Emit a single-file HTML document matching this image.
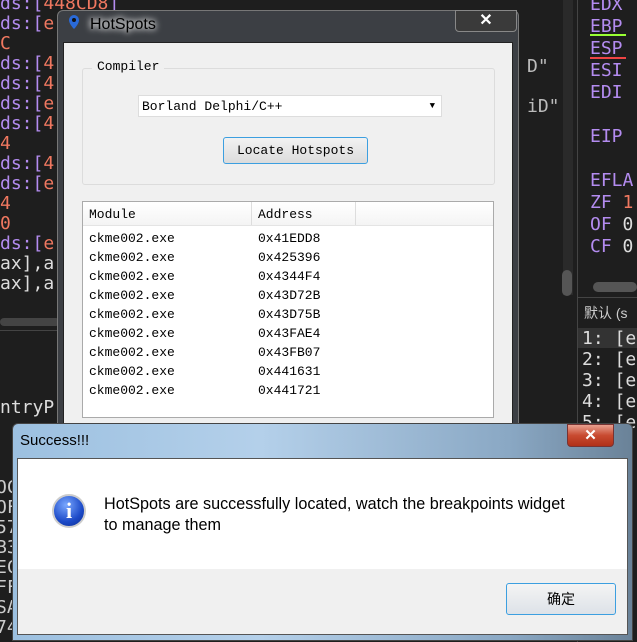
<html><head><style>
body{margin:0;width:637px;height:642px;background:#1e1e1e;position:relative;overflow:hidden;font-family:"Liberation Sans",sans-serif}
.a{position:absolute}
.code{font-family:"DejaVu Sans Mono",monospace;font-size:18px;line-height:20px;color:#b48cf0;white-space:pre}
.o{color:#f07860}.w{color:#ddd}
.mono{font-family:"Liberation Mono","Noto Sans CJK SC",monospace;font-size:13px;color:#000}
</style></head><body>
<div class="a code" style="left:0;top:-6px">ds:[<span class="o">448CD8</span>]
ds:[<span class="o">e</span>
<span class="o">C</span>
ds:[<span class="o">4</span>
ds:[<span class="o">4</span>
ds:[<span class="o">e</span>
ds:[<span class="o">4</span>
<span class="o">4</span>
ds:[<span class="o">4</span>
ds:[<span class="o">e</span>
<span class="o">4</span>
<span class="o">0</span>
ds:[<span class="o">e</span>
<span class="w">ax],a</span>
<span class="w">ax],a</span></div>
<div class="a" style="left:0;top:318px;width:60px;height:8px;background:#444;border-radius:4px"></div>
<div class="a" style="left:0;top:330px;width:60px;height:1px;background:#444"></div>
<div class="a code w" style="left:0;top:398px;color:#ddd">ntryP</div>
<div class="a code w" style="left:-4px;top:478px;color:#ccc">OC
OF
57
B3
EC
FF
SA
74</div>
<div class="a" style="left:520px;top:0;width:40px;height:330px;background:#1e1e1e"></div>
<div class="a code w" style="left:527px;top:57px;color:#bbb">D"

iD"</div>
<div class="a" style="left:563px;top:0;width:10px;height:295px;background:#2a2a2a"></div>
<div class="a" style="left:562px;top:270px;width:10px;height:26px;background:#555;border-radius:5px"></div>
<div class="a" style="left:577px;top:0;width:1px;height:642px;background:#444"></div>
<div class="a code" style="left:590px;top:-6px;line-height:22px">EDX
EBP
ESP
ESI
EDI

EIP

EFLA
ZF <span class="o">1</span>
<span>OF</span> <span class="w">0</span>
CF <span class="w">0</span></div>
<div class="a" style="left:590px;top:34px;width:36px;height:2px;background:#9f3"></div>
<div class="a" style="left:590px;top:57px;width:36px;height:2px;background:#e44"></div>
<div class="a" style="left:593px;top:282px;width:44px;height:10px;background:#555;border-radius:5px"></div>
<div class="a" style="left:578px;top:297px;width:60px;height:1px;background:#444"></div>
<div class="a" style="left:584px;top:303px;font-size:14px;color:#ccc;font-family:'Liberation Sans','Noto Sans CJK SC',sans-serif">默认 (s</div>
<div class="a" style="left:578px;top:328px;width:60px;height:20px;background:#333"></div>
<div class="a code w" style="left:582px;top:328px;line-height:21px;color:#ddd">1: [e
2: [e
3: [e
4: [e
5: [e</div>

<!-- HotSpots window -->
<div class="a" style="left:57px;top:10px;width:462px;height:420px;background:#3c3f44;border:1px solid #777;border-radius:6px 6px 0 0;box-sizing:border-box"></div>
<div class="a" style="left:68px;top:14px;width:10px;height:14px;"><svg width="12" height="16"><path d="M6 1a5 5 0 0 1 5 5c0 4-5 9-5 9s-5-5-5-9a5 5 0 0 1 5-5z" fill="#2a6ad8"/><circle cx="6" cy="6" r="2" fill="#111"/></svg></div>
<div class="a" style="left:90px;top:16px;font-size:16px;color:#000;text-shadow:0 0 6px #fff,0 0 8px #fff">HotSpots</div>
<div class="a" style="left:455px;top:10px;width:62px;height:22px;border:1px solid #888;border-radius:0 0 4px 4px;box-sizing:border-box;background:#3a3a3a;color:#fff;font-size:16px;font-weight:bold;text-align:center;line-height:20px">✕</div>
<div class="a" style="left:63px;top:42px;width:450px;height:390px;background:#f0f0f0;border:1px solid #222;box-sizing:border-box"></div>
<div class="a" style="left:82px;top:68px;width:413px;height:117px;border:1px solid #dcdcdc;border-radius:3px;box-sizing:border-box"></div>
<div class="a mono" style="left:92px;top:59px;background:#f0f0f0;padding:0 5px">Compiler</div>
<div class="a mono" style="left:138px;top:95px;width:304px;height:22px;background:#fff;border:1px solid #ddd;box-sizing:border-box;padding:3px 3px;line-height:15px">Borland Delphi/C++<span style="position:absolute;right:6px;top:3px;font-size:9px">▼</span></div>
<div class="a mono" style="left:223px;top:137px;width:145px;height:27px;border:1px solid #3c9fe0;border-radius:3px;box-sizing:border-box;background:linear-gradient(#f2f2f2,#dcdcdc);text-align:center;line-height:25px">Locate Hotspots</div>
<div class="a" style="left:82px;top:201px;width:412px;height:217px;background:#fff;border:1px solid #aaa;box-sizing:border-box"></div>
<div class="a" style="left:83px;top:202px;width:410px;height:23px;background:linear-gradient(#fff,#f4f4f4);border-bottom:1px solid #e4e4e4"></div>
<div class="a" style="left:251px;top:202px;width:1px;height:23px;background:#ddd"></div>
<div class="a" style="left:355px;top:202px;width:1px;height:23px;background:#ddd"></div>
<div class="a mono" style="left:89px;top:207px">Module</div>
<div class="a mono" style="left:258px;top:207px">Address</div>
<div class="a mono" style="left:89px;top:229px;line-height:19px;white-space:pre">ckme002.exe
ckme002.exe
ckme002.exe
ckme002.exe
ckme002.exe
ckme002.exe
ckme002.exe
ckme002.exe
ckme002.exe</div>
<div class="a mono" style="left:258px;top:229px;line-height:19px;white-space:pre">0x41EDD8
0x425396
0x4344F4
0x43D72B
0x43D75B
0x43FAE4
0x43FB07
0x441631
0x441721</div>

<!-- Success dialog -->
<div class="a" style="left:12px;top:423px;width:621px;height:218px;background:linear-gradient(90deg,#9cc0e0,#b4d0ea 40%,#8aa8c4 80%,#6a8298);border:1px solid #444;border-radius:6px 6px 0 0;box-sizing:border-box"></div>
<div class="a" style="left:20px;top:432px;font-size:15px;color:#000">Success!!!</div>
<div class="a" style="left:567px;top:424px;width:47px;height:23px;border:1px solid #733;border-radius:0 0 4px 4px;box-sizing:border-box;background:linear-gradient(#e8a090,#c84a30 50%,#b03018);color:#fff;font-size:15px;font-weight:bold;text-align:center;line-height:21px">✕</div>
<div class="a" style="left:17px;top:458px;width:611px;height:177px;background:#f0f0f0;border:1px solid #555;box-sizing:border-box"></div>
<div class="a" style="left:18px;top:459px;width:609px;height:110px;background:#fff"></div>
<div class="a" style="left:52px;top:494px;width:34px;height:34px;border-radius:50%;background:radial-gradient(circle at 40% 30%,#7aa8ff,#1c4ac8 60%,#0c2c90);border:2px solid #ccc;box-sizing:border-box;color:#fff;font:bold 22px 'Liberation Serif',serif;text-align:center;line-height:30px">i</div>
<div class="a" style="left:104px;top:494px;font-size:16.2px;line-height:21px;color:#000">HotSpots are successfully located, watch the breakpoints widget<br>to manage them</div>
<div class="a" style="left:506px;top:583px;width:110px;height:32px;border:1px solid #3c9fe0;border-radius:3px;box-sizing:border-box;background:linear-gradient(#f4f4f4,#dde2e8);text-align:center;line-height:30px;font-size:14px;font-family:'Liberation Sans','Noto Sans CJK SC',sans-serif">确定</div>
</body></html>
